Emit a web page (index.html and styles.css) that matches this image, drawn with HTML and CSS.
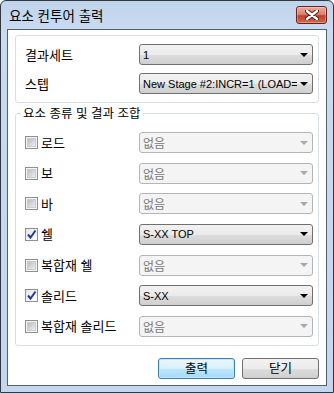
FILE: index.html
```html
<!DOCTYPE html>
<html lang="ko">
<head>
<meta charset="utf-8">
<link rel="stylesheet" href="styles.css">
</head>
<body>
<div class="window">
  <div class="titlebar">
    <span class="title">요소 컨투어 출력</span>
    <span class="close"><svg width="14" height="10" viewBox="0 0 14 10"><path d="M2 1 L12 9 M12 1 L2 9" stroke="#5a1a10" stroke-width="4.4" stroke-linecap="round"/><path d="M2 1 L12 9 M12 1 L2 9" stroke="#ffffff" stroke-width="2.4" stroke-linecap="round"/></svg></span>
  </div>
  <div class="client">
    <div class="group top">
      <span class="lbl">결과세트</span>
      <div class="combo on"><span class="val">1</span><span class="arrow"></span></div>
      <span class="lbl">스텝</span>
      <div class="combo on"><span class="val">New Stage #2:INCR=1 (LOAD=</span><span class="arrow"></span></div>
    </div>
    <fieldset class="group types">
      <legend>요소 종류 및 결과 조합</legend>
      <div class="rows">
        <label class="chk"><span class="cb"><span class="in"></span></span>로드</label>
        <div class="combo off"><span class="val">없음</span><span class="arrow"></span></div>
        <label class="chk"><span class="cb"><span class="in"></span></span>보</label>
        <div class="combo off"><span class="val">없음</span><span class="arrow"></span></div>
        <label class="chk"><span class="cb"><span class="in"></span></span>바</label>
        <div class="combo off"><span class="val">없음</span><span class="arrow"></span></div>
        <label class="chk"><span class="cb checked"><svg width="11" height="11" viewBox="0 0 11 11"><path d="M2 5.5 L4.5 8.5 L9.5 1.5" fill="none" stroke="#233c8f" stroke-width="2"/></svg></span>쉘</label>
        <div class="combo on"><span class="val">S-XX TOP</span><span class="arrow"></span></div>
        <label class="chk"><span class="cb"><span class="in"></span></span>복합재 쉘</label>
        <div class="combo off"><span class="val">없음</span><span class="arrow"></span></div>
        <label class="chk"><span class="cb checked"><svg width="11" height="11" viewBox="0 0 11 11"><path d="M2 5.5 L4.5 8.5 L9.5 1.5" fill="none" stroke="#233c8f" stroke-width="2"/></svg></span>솔리드</label>
        <div class="combo on"><span class="val">S-XX</span><span class="arrow"></span></div>
        <label class="chk"><span class="cb"><span class="in"></span></span>복합재 솔리드</label>
        <div class="combo off"><span class="val">없음</span><span class="arrow"></span></div>
      </div>
    </fieldset>
    <div class="buttons">
      <button class="btn default">출력</button>
      <button class="btn">닫기</button>
    </div>
  </div>
</div>
</body>
</html>
```
FILE: styles.css
```css
* { box-sizing: border-box; }
html, body { margin: 0; padding: 0; background: #ffffff; }
body { font-family: "Noto Sans CJK KR", "Noto Sans", sans-serif; font-size: 12px; color: #000; }

.window {
  width: 334px;
  height: 393px;
  border: 1px solid #30373f;
  border-radius: 6px 6px 0 0;
  background: linear-gradient(#c0d4ec, #c9dbf0 30px, #c3d6ee);
  padding: 0 6px 6px 6px;
  display: flex;
  flex-direction: column;
}

.titlebar {
  height: 28px;
  display: flex;
  align-items: flex-start;
  justify-content: space-between;
}
.title {
  margin-top: 6px;
  margin-left: 2px;
  font-size: 13.5px;
  line-height: 17px;
  color: #000;
}
.close {
  margin-top: 5px;
  width: 31px;
  height: 18px;
  border: 1px solid #6b2118;
  border-radius: 3px;
  background: linear-gradient(#e9a99b, #d98472 45%, #c0402a 55%, #cf6a50);
  display: flex;
  align-items: center;
  justify-content: center;
  box-shadow: inset 0 0 0 1px rgba(255,255,255,0.3);
}

.client {
  flex: 1;
  border: 1px solid #55606c;
  background: #ffffff;
  padding: 5px 7px 0 7px;
}

.group {
  border: 1px solid #d5dfe5;
  border-radius: 3px;
}
.group.top {
  height: 68px;
  padding: 8px 5px 8px 9px;
  display: grid;
  grid-template-columns: 1fr 174px;
  grid-template-rows: 21px 21px;
  row-gap: 8px;
  align-items: center;
}
.lbl { line-height: 16px; font-size: 13px; }

.types {
  margin: 3px 0 0 0;
  padding: 12px 5px 8px 9px;
  min-width: 0;
}
.types legend {
  padding: 0 2px;
  margin-left: -4px;
  line-height: 14px;
  font-size: 12.5px;
}
.rows {
  display: grid;
  grid-template-columns: 1fr 174px;
  grid-auto-rows: 21px;
  row-gap: 9.67px;
  align-items: center;
}

.combo {
  height: 21px;
  border-radius: 3px;
  display: flex;
  align-items: center;
  padding: 0 4px 0 3px;
  overflow: hidden;
}
.combo .val {
  flex: 1;
  min-width: 0;
  white-space: nowrap;
  overflow: hidden;
}
.combo.on {
  border: 1px solid #707070;
  background: linear-gradient(#f2f2f2, #ebebeb 50%, #dddddd 51%, #cfcfcf);
}
.combo.on .val {
  font-family: "Liberation Sans", Arial, sans-serif;
  font-size: 11px;
  letter-spacing: 0;
}
.combo.off {
  border: 1px solid #b2b6b9;
  background: #f4f4f4;
}
.combo.off .val {
  color: #7a7a7a;
  font-size: 12px;
}
.arrow {
  flex: none;
  width: 0;
  height: 0;
  border-left: 4px solid transparent;
  border-right: 4px solid transparent;
  border-top: 4px solid #000;
  margin-left: 3px;
}
.combo.off .arrow { border-top-color: #a8a8a8; }

.chk {
  display: flex;
  align-items: center;
  gap: 3px;
  line-height: 16px;
  font-size: 13px;
}
.cb {
  flex: none;
  width: 13px;
  height: 13px;
  border: 1px solid #8e8f8f;
  background: #f5f5f5;
  padding: 2px;
  display: flex;
  align-items: center;
  justify-content: center;
}
.cb .in {
  width: 7px;
  height: 7px;
  background: linear-gradient(135deg, #b9bdc2, #eeeeee);
  box-shadow: 0 0 0 1px #c9cccf;
}
.cb.checked {
  padding: 0;
  background: linear-gradient(135deg, #e4e6ea, #ffffff);
}

.buttons {
  margin-top: 12px;
  display: flex;
  justify-content: flex-end;
  gap: 7px;
}
.btn {
  width: 77px;
  height: 21px;
  font-family: "Noto Sans CJK KR", sans-serif;
  font-size: 12.5px;
  line-height: 14px;
  padding: 0;
  border: 1px solid #707070;
  border-radius: 3px;
  background: linear-gradient(#f2f2f2, #ebebeb 50%, #dddddd 51%, #cfcfcf);
  color: #000;
}
.btn.default {
  border-color: #3c7fb1;
  background: linear-gradient(#eaf6fd, #d9f0fc 50%, #bee6fd 51%, #a7d9f5);
  box-shadow: inset 0 0 0 1px #c0e7fb;
}
```
